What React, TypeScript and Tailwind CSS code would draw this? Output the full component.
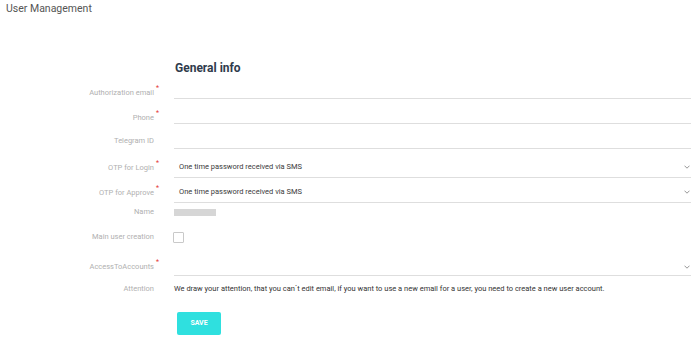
import type { ReactNode } from "react"

const font = { fontFamily: "Roboto, 'Liberation Sans', sans-serif" }

function Label({ text, required, className = "" }: { text: string; required?: boolean; className?: string }) {
  return (
    <div className={`flex w-[160px] shrink-0 justify-end text-[7.5px] leading-[10px] text-[#b0b0b0] ${className}`}>
      <span>{text}</span>
      {required ? (
        <span className="ml-[2px] w-[4px] -translate-y-[3px] text-[7px] leading-[7px] text-[#e53935]">*</span>
      ) : (
        <span className="ml-[2px] w-[4px]" />
      )}
    </div>
  )
}

function Chevron() {
  return (
    <svg width="6" height="4" viewBox="0 0 6 4" className="mr-[1px] shrink-0">
      <path d="M0.5 0.7 L3 3.2 L5.5 0.7" fill="none" stroke="#8a8a8a" strokeWidth="0.9" />
    </svg>
  )
}

function Row({ children, className = "" }: { children: ReactNode; className?: string }) {
  return <div className={`flex items-center ${className}`}>{children}</div>
}

function TextField({ h }: { h: string }) {
  return <div className={`ml-[14px] flex-1 border-b border-[#dedede] ${h}`} />
}

function SelectField({ value, h }: { value?: string; h: string }) {
  return (
    <div className={`ml-[14px] flex flex-1 items-center justify-between border-b border-[#dedede] pl-[5px] ${h}`}>
      <span className="text-[7.5px] leading-[10px] text-[#3a3a3a]">{value}</span>
      <Chevron />
    </div>
  )
}

export default function App() {
  return (
    <div className="h-[342px] w-[700px] overflow-hidden bg-white" style={font}>
      <div className="pl-[6px] pt-[2px] text-[10.5px] leading-[13px] text-[#555]">User Management</div>

      <div className="pr-[9px]">
        <h2 className="ml-[175px] mt-[45px] text-[12px] font-bold leading-[16px] text-[#2f3b4c]">General info</h2>

        <Row className="mt-[10px] h-[13px]">
          <Label text="Authorization email" required />
          <TextField h="h-[13px]" />
        </Row>

        <Row className="mt-[12px] h-[13px]">
          <Label text="Phone" required />
          <TextField h="h-[13px]" />
        </Row>

        <Row className="mt-[12px] h-[13px]">
          <Label text="Telegram ID" className="-translate-y-[2px]" />
          <TextField h="h-[13px]" />
        </Row>

        <Row className="mt-[8px] h-[21px]">
          <Label text="OTP for Login" required />
          <SelectField value="One time password received via SMS" h="h-[21px]" />
        </Row>

        <Row className="mt-[4px] h-[21px]">
          <Label text="OTP for Approve" required />
          <SelectField value="One time password received via SMS" h="h-[21px]" />
        </Row>

        <Row className="mt-[3px] h-[12px]">
          <Label text="Name" />
          <div className="ml-[14px] h-[7px] w-[42px] bg-[#d6d6d6]" />
        </Row>

        <Row className="mt-[12px] h-[14px]">
          <Label text="Main user creation" />
          <div className="ml-[13px] h-[11px] w-[11px] rounded-[1px] border border-[#c9c9c9] bg-white" />
        </Row>

        <Row className="mt-[14px] h-[18px]">
          <Label text="AccessToAccounts" required />
          <SelectField h="h-[18px]" />
        </Row>

        <Row className="mt-[7px] h-[12px]">
          <Label text="Attention" />
          <div className="ml-[14px] text-[7.5px] leading-[10px] text-[#333]">
            We draw your attention, that you can`t edit email, if you want to use a new email for a user, you need to
            create a new user account.
          </div>
        </Row>

        <button className="ml-[177px] mt-[17px] flex h-[23px] w-[44px] items-center justify-center rounded-[2px] bg-[#2fe0df] text-[7px] font-bold text-white">
          SAVE
        </button>
      </div>
    </div>
  )
}
